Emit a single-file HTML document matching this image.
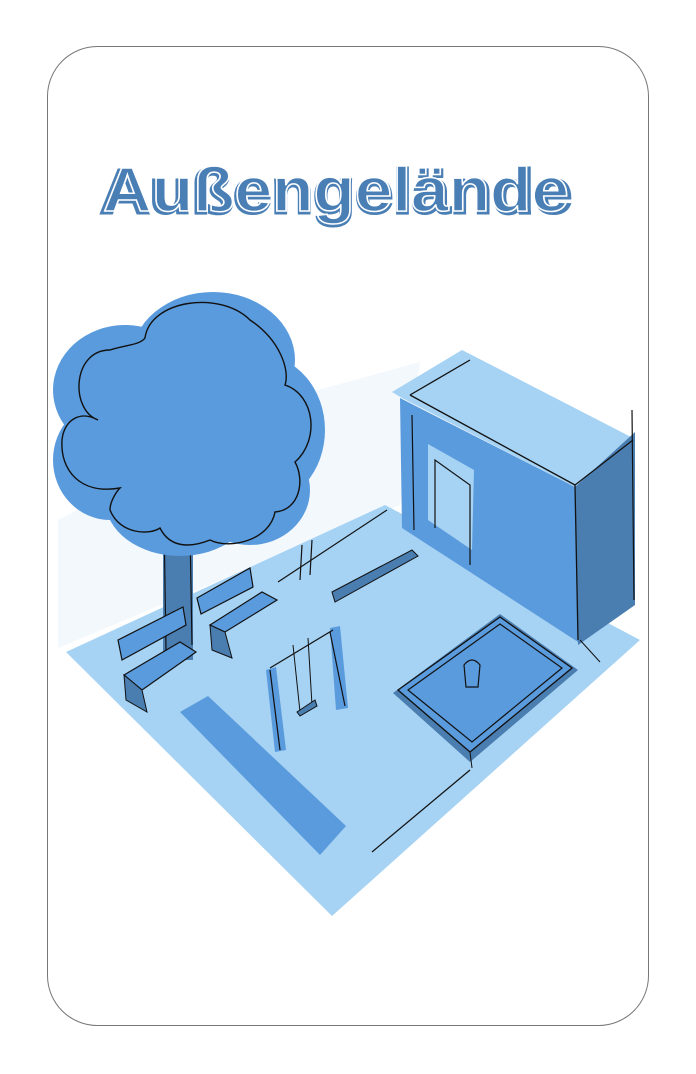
<!DOCTYPE html>
<html><head><meta charset="utf-8"><style>
html,body{margin:0;padding:0;background:#fff;width:696px;height:1074px;overflow:hidden}
svg{display:block}
</style></head><body>
<svg width="696" height="1074" viewBox="0 0 696 1074" xmlns="http://www.w3.org/2000/svg">
<rect x="47.5" y="46.5" width="601" height="979" rx="50" ry="50" fill="#fff" stroke="#777" stroke-width="1"/>
<text x="100" y="213" font-family="'Liberation Sans',sans-serif" font-weight="bold" font-size="62" fill="#4a7fb5" stroke="#4a7fb5" stroke-width="3" textLength="472" lengthAdjust="spacingAndGlyphs">Außengelände</text>
<text x="103" y="211" font-family="'Liberation Sans',sans-serif" font-weight="bold" font-size="62" fill="none" stroke="#fff" stroke-width="1.5" textLength="466" lengthAdjust="spacingAndGlyphs">Außengelände</text>
<!-- pale background -->
<polygon points="58,520 58,648 400,505 420,362 300,395" fill="#f3f8fd"/>
<!-- ground -->
<polygon points="66,652 385,505 640,640 332,916" fill="#a6d2f3"/>
<!-- dark strip -->
<polygon points="180,712 208,696 346,826 320,855" fill="#5a9bdd"/>
<!-- building top -->
<polygon points="392,392 462,350 633,438 575,487 402,398" fill="#a6d2f3"/>
<!-- building front -->
<polygon points="400,398 575,487 578,642 402,528" fill="#5a9bdd"/>
<!-- building side -->
<polygon points="575,487 635,432 635,605 578,645" fill="#4a7db0"/>
<line x1="410" y1="395" x2="470" y2="360" stroke="#111" stroke-width="1.3"/>
<line x1="410" y1="395" x2="575" y2="485" stroke="#111" stroke-width="1.3"/>
<line x1="575" y1="485" x2="633" y2="440" stroke="#111" stroke-width="1.2"/>
<line x1="575" y1="485" x2="578" y2="640" stroke="#111" stroke-width="1.3"/>
<line x1="632" y1="410" x2="634" y2="600" stroke="#111" stroke-width="1.2"/>
<line x1="412" y1="415" x2="414" y2="530" stroke="#111" stroke-width="1.2"/>
<!-- door -->
<polygon points="428,444 474,470 472,550 428,520" fill="#a6d2f3"/>
<polyline points="435,528 435,460 470,485 470,565" fill="none" stroke="#111" stroke-width="1.2"/>
<!-- sandbox -->
<polygon points="393,693 500,614 578,670 470,762" fill="#4a7db0"/>
<polygon points="398,690 500,617 572,668 470,752" fill="#5a9bdd" stroke="#111" stroke-width="1.3"/>
<polygon points="408,690 500,624 562,668 472,742" fill="none" stroke="#111" stroke-width="1.2"/>
<line x1="470" y1="752" x2="472" y2="768" stroke="#111" stroke-width="1"/>
<line x1="372" y1="852" x2="470" y2="770" stroke="#111" stroke-width="1.2"/>
<line x1="580" y1="640" x2="600" y2="662" stroke="#111" stroke-width="1"/>
<path d="M464 665 q8 -10 16 0 l-2 22 h-12 z" fill="none" stroke="#111" stroke-width="1.2"/>
<!-- swing -->
<polygon points="266,670 276,667 286,750 275,752" fill="#5a9bdd"/>
<polygon points="330,628 340,626 348,708 336,710" fill="#5a9bdd"/>
<line x1="270" y1="670" x2="280" y2="750" stroke="#111" stroke-width="1.2"/>
<line x1="330" y1="632" x2="345" y2="706" stroke="#111" stroke-width="1.2"/>
<line x1="270" y1="668" x2="333" y2="630" stroke="#111" stroke-width="1.2"/>
<line x1="293" y1="645" x2="300" y2="712" stroke="#111" stroke-width="1"/>
<line x1="308" y1="638" x2="312" y2="705" stroke="#111" stroke-width="1"/>
<polygon points="297,712 315,700 317,706 300,716" fill="#4a7db0" stroke="#111" stroke-width="1"/>
<!-- seesaw -->
<polygon points="332,592 412,550 418,556 335,602" fill="#4a7db0" stroke="#111" stroke-width="1"/>
<line x1="330" y1="590" x2="385" y2="510" stroke="#111" stroke-width="0" />
<line x1="278" y1="582" x2="387" y2="510" stroke="#111" stroke-width="1.2"/>
<line x1="302" y1="545" x2="300" y2="580" stroke="#111" stroke-width="1.2"/>
<line x1="312" y1="540" x2="310" y2="575" stroke="#111" stroke-width="1.2"/>
<!-- tree trunk -->
<rect x="163" y="515" width="30" height="145" fill="#4a7db0"/>
<line x1="164" y1="520" x2="166" y2="650" stroke="#111" stroke-width="1.2"/>
<line x1="190" y1="530" x2="192" y2="645" stroke="#111" stroke-width="1.2"/>
<!-- benches -->
<polygon points="118,640 183,607 186,625 122,660" fill="#5a9bdd" stroke="#111" stroke-width="1.2"/>
<polygon points="124,675 180,642 196,652 142,690" fill="#5a9bdd" stroke="#111" stroke-width="1.2"/>
<polygon points="124,675 142,690 147,712 126,700" fill="#4a7db0" stroke="#111" stroke-width="1"/>
<polygon points="197,598 250,568 253,587 201,614" fill="#5a9bdd" stroke="#111" stroke-width="1.2"/>
<polygon points="210,625 262,592 277,600 225,632" fill="#5a9bdd" stroke="#111" stroke-width="1.2"/>
<polygon points="210,625 225,632 232,658 212,650" fill="#4a7db0" stroke="#111" stroke-width="1"/>
<!-- canopy -->
<g fill="#5a9bdd">
<ellipse cx="213" cy="360" rx="82" ry="68"/>
<ellipse cx="125" cy="390" rx="72" ry="65"/>
<ellipse cx="110" cy="460" rx="57" ry="60"/>
<ellipse cx="260" cy="430" rx="65" ry="75"/>
<ellipse cx="180" cy="450" rx="100" ry="80"/>
<ellipse cx="180" cy="500" rx="75" ry="56"/>
<ellipse cx="250" cy="490" rx="60" ry="55"/>
</g>
<path d="M145 338 C150 300 220 290 250 320 C280 340 290 370 285 385 C315 395 320 440 295 462 C305 480 300 510 275 512 C270 540 230 550 210 540 C190 548 170 548 160 528 C150 535 120 535 110 510 C110 500 118 490 120 488 C80 495 60 470 62 440 C64 420 80 410 98 420 C70 410 72 350 110 350 C125 345 140 345 145 338 Z" fill="none" stroke="#111" stroke-width="1.4"/>
</svg>
</body></html>
